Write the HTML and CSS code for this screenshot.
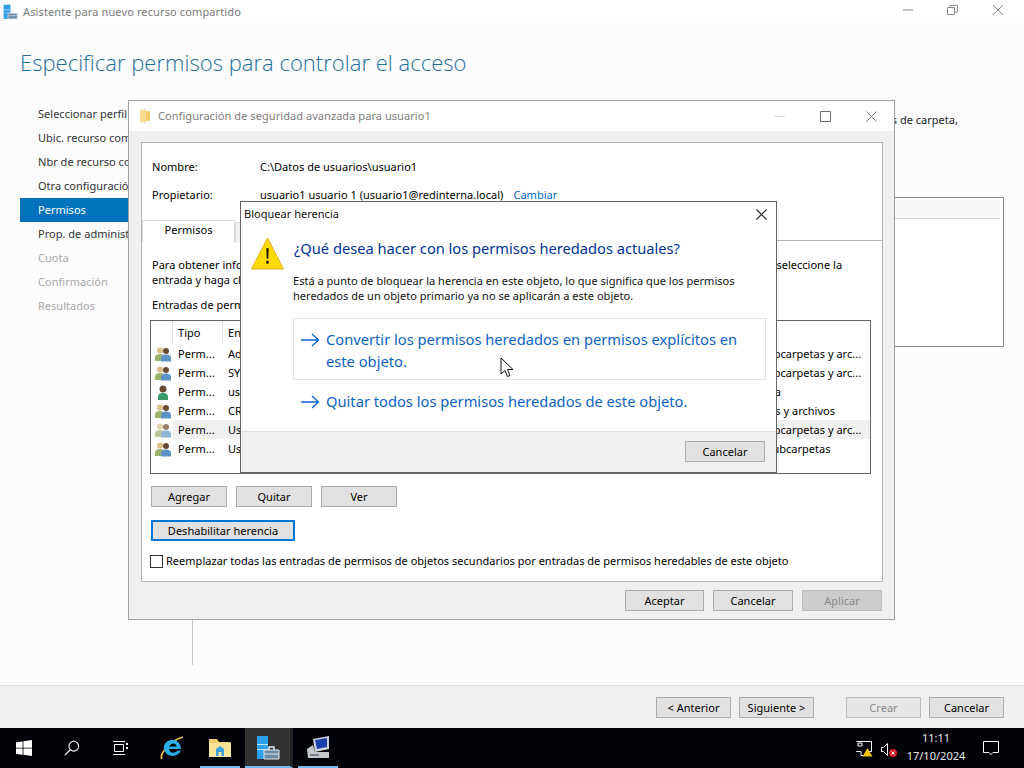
FILE: index.html
```html
<!DOCTYPE html>
<html lang="es">
<head>
<meta charset="utf-8">
<title>Asistente para nuevo recurso compartido</title>
<link rel="stylesheet" href="styles.css">
</head>
<body>
<svg class="defs" width="0" height="0" aria-hidden="true">
  <symbol id="users" viewBox="0 0 16 16">
    <circle cx="5" cy="4.500" r="3" fill="#d9c08a"/><path d="M0 15v-3c0-3 2-4 5-4s4 1 4 4v3z" fill="#9cb36c"/>
    <circle cx="11" cy="5" r="3" fill="#6b4a33"/><path d="M6 15.500v-3c0-3 2-4 5-4s5 1 5 4v3z" fill="#5d93c4"/>
  </symbol>
  <symbol id="user" viewBox="0 0 16 16">
    <circle cx="8" cy="5" r="3.500" fill="#6b4a33"/><path d="M3 16v-3c0-3 2-4 5-4s5 1 5 4v3z" fill="#3f9a6a"/>
  </symbol>
  <symbol id="server" viewBox="0 0 24 24">
    <path d="M1 0h11v23H1z" fill="#2f9fe8"/><path d="M1 8h11v1H1zM1 13h11v1H1z" fill="#bfe3fa"/>
    <path d="M8 14h15v9H8z" fill="#6d8ba3" stroke="#dfe8ee" stroke-width="1"/><path d="M13 14v-3h5v3" fill="none" stroke="#dfe8ee" stroke-width="1.500"/><path d="M8 18h15" stroke="#dfe8ee"/>
  </symbol>
</svg>

<main class="wizard">
  <header class="titlebar">
    <svg class="app-icon" width="15" height="18" viewBox="0 0 24 24"><use href="#server"/></svg>
    <span class="titlebar-text">Asistente para nuevo recurso compartido</span>
    <div class="window-controls">
      <svg width="12" height="12" viewBox="0 0 12 12"><path d="M1 6h10" stroke="#8a8a8a"/></svg>
      <svg width="12" height="12" viewBox="0 0 12 12"><path d="M.5 3.500h7v7h-7zM3 3V1.500h7.500V8H8" fill="none" stroke="#8a8a8a"/></svg>
      <svg width="12" height="12" viewBox="0 0 12 12"><path d="M1 1l10 10M11 1L1 11" stroke="#8a8a8a"/></svg>
    </div>
  </header>
  <div class="wizard-body">
    <h1 class="wizard-heading">Especificar permisos para controlar el acceso</h1>
    <div class="wizard-columns">
      <nav class="steps">
        <div class="step">Seleccionar perfil</div>
        <div class="step">Ubic. recurso compartido</div>
        <div class="step">Nbr de recurso compartido</div>
        <div class="step">Otra configuración</div>
        <div class="step step-active">Permisos</div>
        <div class="step">Prop. de administración</div>
        <div class="step step-off">Cuota</div>
        <div class="step step-off">Confirmación</div>
        <div class="step step-off">Resultados</div>
      </nav>
      <section class="pane">
        <p class="pane-intro">Los permisos de acceso a los archivos se establecen con una combinación de permisos de carpeta,</p>
        <div class="pane-list"><div class="pane-list-head"></div></div>
      </section>
    </div>
  </div>
  <footer class="wizard-footer">
    <button class="btn btn-wide">&lt; Anterior</button>
    <button class="btn btn-wide">Siguiente &gt;</button>
    <button class="btn btn-wide btn-off btn-gap">Crear</button>
    <button class="btn btn-wide">Cancelar</button>
  </footer>
</main>

<nav class="taskbar">
  <svg class="tb-start" width="16" height="16" viewBox="0 0 16 16"><path d="M0 2.300l6.600-.9v6.300H0zM7.400 1.300L16 0v7.700H7.400zM0 8.500h6.600v6.300L0 13.900zM7.400 8.500H16V16l-8.600-1.200z" fill="#fff"/></svg>
  <svg class="tb-search" width="16" height="16" viewBox="0 0 18 18"><circle cx="11" cy="7" r="5.500" fill="none" stroke="#fff" stroke-width="1.200"/><path d="M7 11l-6 6" stroke="#fff" stroke-width="1.400"/></svg>
  <svg class="tb-view" width="16" height="16" viewBox="0 0 16 16"><path d="M2.500 4.500h9v7h-9zM1 1.500h12M1 14.500h12" fill="none" stroke="#fff"/><path d="M14 3h2v2h-2zM14 7h2v2h-2z" fill="#fff"/></svg>
  <svg class="tb-ie" width="24" height="24" viewBox="0 0 24 24">
    <path d="M2 23C-1 19 9 5 23 1" fill="none" stroke="#e8b93a" stroke-width="1.800"/>
    <path d="M12 4a8.500 8.500 0 0 1 9 9H9c.3 4 5.500 5 9 1.500h3C18 22 6 22 4 13 3 8 7 4 12 4zM9.200 10.500h7.600C16 6.500 10 6.500 9.200 10.500z" fill="#2aaee8"/>
  </svg>
  <div class="tb-slot tb-slot-open tb-slot-first">
    <svg width="22" height="20" viewBox="0 0 22 20"><path d="M0 1h8l2 3h11a1 1 0 0 1 1 1v14H0z" fill="#f2cf6b"/><path d="M0 5h22v14H0z" fill="#fbe59a"/><path d="M7 11l4-3 4 3v7H7z" fill="#3aa0e0"/><path d="M9.500 14h3v4h-3z" fill="#fbe59a"/></svg>
  </div>
  <div class="tb-slot tb-slot-open tb-slot-active">
    <svg width="24" height="24" viewBox="0 0 24 24"><use href="#server"/></svg>
  </div>
  <div class="tb-slot tb-slot-open">
    <svg width="24" height="24" viewBox="0 0 24 24"><path d="M7 3l16-3v13L9 16z" fill="#cfd6de"/><path d="M9 4l12-2v9L11 13z" fill="#1b3fae"/><path d="M1 13l6-4 2 7h14v6H2z" fill="#c2c8cc"/><path d="M4 18h9v2H4z" fill="#7d8288"/></svg>
  </div>
  <div class="tray">
    <svg width="17" height="17" viewBox="0 0 17 17"><path d="M.5 1.500h15v10h-5M5 11.500H.5zM5 11.500v4" fill="none" stroke="#fff"/><path d="M2 3h4v3H2z" fill="none" stroke="#fff"/><path d="M5 15.500h3" stroke="#fff"/><path d="M11.500 8l5 8.500h-10z" fill="#f8c400"/></svg>
    <svg class="tray-sound" width="16" height="16" viewBox="0 0 16 16"><path d="M.5 5.500h2l4-4v12l-4-4h-2z" fill="none" stroke="#fff"/><circle cx="12" cy="11" r="4" fill="#d9202c"/><path d="M10.500 9.500l3 3M13.500 9.500l-3 3" stroke="#fff"/></svg>
  </div>
  <div class="clock"><span>11:11</span><span>17/10/2024</span></div>
  <svg class="tb-notify" width="16" height="16" viewBox="0 0 16 16"><path d="M.5 1.500h15v11h-5.500l-2 2-2-2H.5z" fill="none" stroke="#fff"/></svg>
</nav>

<section class="security">
  <header class="sec-title">
    <svg width="11" height="14" viewBox="0 0 11 14"><path d="M0 1l6-1v14l-6-1z" fill="#f5dc8e"/><path d="M6 2h4v10H6z" fill="#f2cc66"/></svg>
    <span class="sec-title-text">Configuración de seguridad avanzada para usuario1</span>
    <div class="sec-controls">
      <svg width="11" height="11" viewBox="0 0 11 11"><path d="M0 5.500h11" stroke="#dcdcdc"/></svg>
      <svg width="11" height="11" viewBox="0 0 11 11"><path d="M.5.500h10v10H.500z" fill="none" stroke="#6c6c6c"/></svg>
      <svg width="11" height="11" viewBox="0 0 11 11"><path d="M.5.500l10 10M10.500.500l-10 10" stroke="#7a7a7a"/></svg>
    </div>
  </header>
  <div class="sec-body">
    <div class="sec-panel">
      <div class="info-row info-first"><span class="info-label">Nombre:</span><span>C:\Datos de usuarios\usuario1</span></div>
      <div class="info-row info-owner"><span class="info-label">Propietario:</span><span>usuario1 usuario 1 (usuario1@redinterna.local)</span><a class="link">Cambiar</a></div>
      <div class="tabs"><div class="tab tab-on">Permisos</div><div class="tab">Auditoría</div></div>
      <div class="tab-page">
        <p class="help">Para obtener información adicional, haga doble clic en una entrada de permiso. Para modificar una entrada de permiso, seleccione la<br>entrada y haga clic en Editar (si está disponible).</p>
        <p class="list-label">Entradas de permiso:</p>
        <div class="perm-list">
          <div class="perm-head"><span></span><span class="perm-hcell">Tipo</span><span class="perm-hcell">Entidad de seguridad</span></div>
          <div class="perm-row"><svg width="16" height="16"><use href="#users"/></svg><span>Perm...</span><span>Administradores</span><span>Esta carpeta, subcarpetas y arc...</span></div>
          <div class="perm-row"><svg width="16" height="16"><use href="#users"/></svg><span>Perm...</span><span>SYSTEM</span><span>Esta carpeta, subcarpetas y arc...</span></div>
          <div class="perm-row"><svg width="16" height="16"><use href="#user"/></svg><span>Perm...</span><span>usuario1</span><span>Solo esta carpeta</span></div>
          <div class="perm-row"><svg width="16" height="16"><use href="#users"/></svg><span>Perm...</span><span>CREATOR OWNER</span><span>Solo subcarpetas y archivos</span></div>
          <div class="perm-row perm-sel"><svg width="16" height="16"><use href="#users"/></svg><span>Perm...</span><span>Usuarios</span><span>Esta carpeta, subcarpetas y arc...</span></div>
          <div class="perm-row"><svg width="16" height="16"><use href="#users"/></svg><span>Perm...</span><span>Usuarios</span><span>Esta carpeta y subcarpetas</span></div>
        </div>
        <div class="list-actions">
          <button class="btn btn-mid">Agregar</button>
          <button class="btn btn-mid">Quitar</button>
          <button class="btn btn-mid">Ver</button>
        </div>
        <button class="btn btn-focus">Deshabilitar herencia</button>
        <label class="check"><span class="check-box"></span>Reemplazar todas las entradas de permisos de objetos secundarios por entradas de permisos heredables de este objeto</label>
      </div>
    </div>
    <div class="sec-actions">
      <button class="btn btn-big btn-ok">Aceptar</button>
      <button class="btn btn-big">Cancelar</button>
      <button class="btn btn-big btn-off-dark">Aplicar</button>
    </div>
  </div>
</section>

<section class="dialog">
  <header class="dlg-title"><span>Bloquear herencia</span>
    <svg width="11" height="11" viewBox="0 0 11 11"><path d="M.5.500l10 10M10.500.500l-10 10" stroke="#222" stroke-width="1.100"/></svg>
  </header>
  <div class="dlg-main">
    <svg class="warn" width="33" height="33" viewBox="0 0 34 33"><path d="M17 .5L33.500 32.500H.5z" fill="#ffdb00" stroke="#e8a820"/><path d="M15.800 11h2.400l-.4 11h-1.600zM15.800 24h2.400v3h-2.400z" fill="#111"/></svg>
    <div class="dlg-content">
      <h2 class="dlg-heading">¿Qué desea hacer con los permisos heredados actuales?</h2>
      <p class="dlg-text">Está a punto de bloquear la herencia en este objeto, lo que significa que los permisos<br>heredados de un objeto primario ya no se aplicarán a este objeto.</p>
      <a class="cmd cmd-hover">
        <svg width="19" height="14" viewBox="0 0 19 14"><path d="M0 7h17M11 1l6.500 6-6.500 6" fill="none" stroke="#0b63d8" stroke-width="1.300"/></svg>
        <span>Convertir los permisos heredados en permisos explícitos en<br>este objeto.</span>
      </a>
      <a class="cmd">
        <svg width="19" height="14" viewBox="0 0 19 14"><path d="M0 7h17M11 1l6.500 6-6.500 6" fill="none" stroke="#0b63d8" stroke-width="1.300"/></svg>
        <span>Quitar todos los permisos heredados de este objeto.</span>
      </a>
    </div>
  </div>
  <footer class="dlg-footer"><button class="btn btn-big">Cancelar</button></footer>
</section>

<svg class="cursor" width="14" height="21" viewBox="0 0 14 21"><path d="M1 1v16l4-3.500 2.500 6 2.500-1-2.500-6H13z" fill="#fff" stroke="#111" stroke-linejoin="round"/></svg>
</body>
</html>
```
FILE: styles.css
```css
* { box-sizing: border-box; }
html, body { height: 100%; }
body {
  margin: 0;
  width: 1024px;
  height: 768px;
  display: flex;
  flex-direction: column;
  overflow: hidden;
  position: relative;
  font: 11px/16px "Noto Sans", "Open Sans", sans-serif;
  letter-spacing: .02px;
  color: #000;
  background: #fcfcfc;
}
p, h1, h2 { margin: 0; font-weight: 400; }
.defs { position: absolute; }

.btn {
  font: inherit;
  letter-spacing: inherit;
  color: #000;
  height: 21px;
  padding: 0;
  background: #e1e1e1;
  border: 1px solid #adadad;
}
.btn-wide { width: 75px; }
.btn-mid { width: 76px; }
.btn-big { width: 80px; }
.btn-ok { width: 79px; }
.btn-off { color: #8c8c8c; background: #e6e6e6; border-color: #bfbfbf; }
.btn-off-dark { color: #8a8a8a; background: #cccccc; border-color: #bfbfbf; }
.btn-gap { margin-left: 24px; }

.wizard { flex: 1; display: flex; flex-direction: column; min-height: 0; }
.titlebar {
  height: 23px;
  background: #fff;
  display: flex;
  align-items: center;
  padding-left: 3px;
  flex: none;
}
.app-icon { margin-right: 5px; }
.titlebar-text { color: #7a7a7a; letter-spacing: .12px; }
.window-controls { margin: -3px 0 0 auto; display: flex; gap: 33px; padding-right: 20px; }
.wizard-body { flex: 1; min-height: 0; display: flex; flex-direction: column; }
.wizard-heading {
  font: 300 22px/32px "Open Sans", "Noto Sans", sans-serif;
  color: #1b6f9e;
  padding: 23px 0 0 20px;
  height: 79px;
  flex: none;
}
.wizard-columns { display: flex; flex: 1; min-height: 0; padding-left: 20px; }
.steps { width: 173px; flex: none; border-right: 1px solid #c8c8c8; height: 563px; }
.step { height: 24px; line-height: 23px; padding-left: 18px; color: #333; white-space: nowrap; overflow: hidden; }
.step-active { background: #0072bc; color: #fff; }
.step-off { color: #a8a8a8; }
.pane { flex: 1; min-width: 0; display: flex; flex-direction: column; padding-right: 20px; }
.pane-intro { height: 23px; white-space: nowrap; display: flex; justify-content: flex-end; margin: 10px 46px 0 0; color: #222; line-height: 16px; overflow: hidden; }
.pane-list { height: 150px; margin-top: 62px; margin-left: auto; width: 400px; background: #fff; border: 1px solid #7f868c; padding: 2px 3px 0 0; }
.pane-list-head { height: 19px; background: #f8f8f9; border-bottom: 1px solid #d0d2d4; }
.wizard-footer {
  flex: none;
  height: 43px;
  background: #f0f0f0;
  border-top: 1px solid #dcdcdc;
  display: flex;
  justify-content: flex-end;
  gap: 8px;
  padding: 11px 20px 0 0;
}

.taskbar {
  flex: none;
  height: 40px;
  background: #000208;
  display: flex;
  align-items: center;
  color: #fff;
}
.tb-start { margin-left: 16px; }
.tb-search { margin-left: 32px; }
.tb-view { margin-left: 32px; }
.tb-ie { margin-left: 32px; }
.tb-slot {
  height: 40px;
  width: 40px;
  display: flex;
  align-items: center;
  justify-content: center;
  border-bottom: 2px solid transparent;
  padding-top: 1px;
}
.tb-slot-first { margin-left: 16px; }
.tb-slot-open { border-bottom-color: #76b9ed; }
.tb-slot-active { background: #333333; width: 48px; margin: 0 5px 0 5px; border-right: 3px solid #222; }
.tray { margin-left: auto; display: flex; align-items: center; gap: 8px; margin-right: 8px; }
.tray-sound { margin-top: 3px; }
.clock { display: flex; flex-direction: column; align-items: center; line-height: 18px; width: 62px; color: #e8e8e8; margin-top: -2px; }
.tb-notify { margin: 0 25px 0 16px; }

.security {
  position: absolute;
  left: 128px;
  top: 100px;
  width: 767px;
  height: 520px;
  background: #f0f0f0;
  border: 1px solid #a0a0a0;
  display: flex;
  flex-direction: column;
}
.sec-title { height: 30px; background: #fff; display: flex; align-items: center; padding-left: 11px; flex: none; }
.sec-title-text { color: #7d7d7d; margin-left: 7px; letter-spacing: .06px; }
.sec-controls { margin-left: auto; display: flex; gap: 35px; padding-right: 17px; }
.sec-body { flex: 1; display: flex; flex-direction: column; padding: 11px 11px 8px 12px; }
.sec-panel { height: 440px; background: #fff; border: 1px solid #b4b4b4; display: flex; flex-direction: column; }
.info-row { display: flex; height: 29px; padding-left: 10px; align-items: center; }
.info-first { margin-top: 9px; }
.info-owner { margin-top: -1px; margin-bottom: 1px; }
.info-label { width: 108px; flex: none; }
.link { color: #0066cc; margin-left: 10px; }
.tabs { display: flex; height: 21px; margin-top: 10px; border-bottom: 1px solid #b4b4b4; }
.tab { height: 21px; width: 93px; border: 1px solid #dadada; border-width: 1px 1px 0 1px; text-align: center; background: #f0f0f0; margin-top: 2px; }
.tab-on { background: #fff; margin-top: 0; height: 22px; line-height: 18px; position: relative; z-index: 1; }
.tab-page { padding: 16px 11px 0 8px; flex: 1; }
.help { padding-left: 2px; line-height: 15px; white-space: nowrap; }
.list-label { padding-left: 2px; margin-top: 10px; line-height: 16px; }
.perm-list { height: 154px; margin-top: 7px; border: 1px solid #646464; background: #fff; }
.perm-head, .perm-row { display: grid; grid-template-columns: 27px 50px 464px 1fr; align-items: center; white-space: nowrap; }
.perm-head { height: 23px; }
.perm-hcell { border-left: 1px solid #e4e4e4; height: 23px; line-height: 23px; margin-left: -6px; padding-left: 5px; }
.perm-row { height: 19px; line-height: 20px; }
.perm-row svg { margin-left: 4px; }
.perm-sel span { background: #f0f0f0; height: 19px; margin-left: -5px; padding-left: 5px; }
.perm-sel svg { opacity: .7; }
.list-actions { display: flex; gap: 9px; margin-top: 12px; padding-left: 1px; }
.btn-focus { display: block; width: 144px; margin: 13px 0 0 1px; border: 2px solid #0078d7; }
.check { display: flex; align-items: center; margin-top: 12px; white-space: nowrap; height: 16px; }
.check-box { width: 13px; height: 13px; border: 1px solid #333; background: #fff; margin-right: 3px; flex: none; }
.sec-actions { display: flex; justify-content: flex-end; gap: 9px; margin-top: 8px; padding-right: 1px; }

.dialog {
  position: absolute;
  left: 240px;
  top: 201px;
  width: 537px;
  height: 272px;
  background: #fff;
  border: 1px solid #646464;
  display: flex;
  flex-direction: column;
}
.dlg-title { height: 24px; display: flex; align-items: center; justify-content: space-between; padding: 0 9px 0 3px; flex: none; color: #111; }
.dlg-main { flex: 1; display: flex; padding-left: 10px; min-height: 0; }
.warn { flex: none; margin-top: 11px; }
.dlg-content { margin-left: 9px; width: 473px; }
.dlg-heading { font-size: 14.650px; line-height: 22px; color: #003399; margin-top: 11px; padding-left: 1px; white-space: nowrap; letter-spacing: 0; }
.dlg-text { line-height: 15px; margin-top: 14px; white-space: nowrap; color: #111; }
.cmd { display: flex; align-items: flex-start; color: #0b63c8; font-size: 14.700px; line-height: 21.500px; padding: 10px 0 0 7px; height: 62px; border: 1px solid transparent; white-space: nowrap; margin-top: 15px; letter-spacing: 0; }
.cmd svg { flex: none; margin: 4px 6px 0 0; }
.cmd-hover { border-color: #e2e2e2; }
.cmd:last-child { margin-top: 0; height: 42px; }
.dlg-footer { height: 41px; background: #f0f0f0; border-top: 1px solid #dfdfdf; display: flex; justify-content: flex-end; padding: 9px 11px 0 0; flex: none; }

.cursor { position: absolute; left: 500px; top: 357px; }
```
